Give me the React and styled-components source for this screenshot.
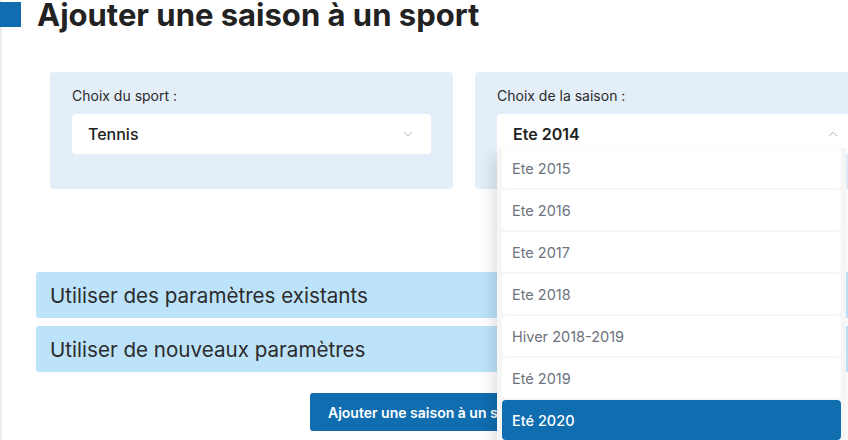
import React from "react";
import styled, { createGlobalStyle } from "styled-components";
import { ChevronDown, ChevronUp } from "lucide-react";

const seasons = [
  "Ete 2015",
  "Ete 2016",
  "Ete 2017",
  "Ete 2018",
  "Hiver 2018-2019",
  "Eté 2019",
  "Eté 2020",
];

function App() {
  return (
    <>
      <GlobalStyle />
      <Page>
        <Header>
          <Marker />
          <Title>Ajouter une saison à un sport</Title>
        </Header>
        <Content>
          <CardsRow>
            <Card>
              <Label>Choix du sport :</Label>
              <Select>
                <SelectValue>Tennis</SelectValue>
                <ChevronDown size={14} strokeWidth={1.5} color="#9aa3ad" />
              </Select>
            </Card>
            <Card>
              <Label>Choix de la saison :</Label>
              <SelectWrap>
                <Select>
                  <SelectValue $strong>Ete 2014</SelectValue>
                  <ChevronUp size={14} strokeWidth={1.5} color="#9aa3ad" />
                </Select>
                <Menu>
                  {seasons.map((s) => (
                    <Option key={s} $selected={s === "Eté 2020"}>
                      {s}
                    </Option>
                  ))}
                </Menu>
              </SelectWrap>
            </Card>
          </CardsRow>
          <Accordion>
            <AccordionBar>Utiliser des paramètres existants</AccordionBar>
            <AccordionBar>Utiliser de nouveaux paramètres</AccordionBar>
          </Accordion>
          <Actions>
            <Button>Ajouter une saison à un sport</Button>
          </Actions>
        </Content>
      </Page>
    </>
  );
}

export default App;

const GlobalStyle = createGlobalStyle`
  html, body {
    margin: 0;
    padding: 0;
    background: #ffffff;
    overflow: hidden;
  }
  body {
    font-family: Inter, "Noto Sans", sans-serif;
    color: #222;
  }
`;

const Page = styled.div`
  width: 920px;
  height: 440px;
  border-left: 2px solid #e9ecf0;
  box-sizing: border-box;
`;

const Header = styled.div`
  display: flex;
  align-items: flex-start;
  height: 32px;
  margin-left: -2px;
`;

const Marker = styled.div`
  width: 21px;
  height: 25px;
  margin-top: 2px;
  background: #0f6db0;
`;

const Title = styled.h1`
  margin: 0 0 0 16px;
  font-size: 31px;
  font-weight: 700;
  line-height: 30px;
  color: #222;
`;

const Content = styled.div`
  padding-left: 34px;
  padding-top: 40px;
`;

const CardsRow = styled.div`
  display: flex;
  gap: 22px;
  padding-left: 14px;
`;

const Card = styled.div`
  width: 403px;
  height: 117px;
  box-sizing: border-box;
  padding: 14px 22px;
  background: #e3eef8;
  border-radius: 4px;
`;

const Label = styled.div`
  font-size: 14px;
  line-height: 20px;
  color: #2a2a2a;
  margin-bottom: 8px;
`;

const SelectWrap = styled.div`
  position: relative;
`;

const Select = styled.div`
  height: 40px;
  display: flex;
  align-items: center;
  justify-content: space-between;
  padding: 0 16px;
  background: #ffffff;
  border-radius: 4px;
`;

const SelectValue = styled.span`
  font-size: 16px;
  font-weight: ${(p) => (p.$strong ? 600 : 500)};
  color: #222;
`;

const Menu = styled.div`
  position: absolute;
  top: 34px;
  left: 0;
  width: 349px;
  box-sizing: border-box;
  padding: 0 5px 5px;
  background: #f6f6f6;
  border-radius: 0 0 4px 4px;
  box-shadow: -5px 8px 14px rgba(0, 0, 0, 0.12);
  display: flex;
  flex-direction: column;
  gap: 2px;
  z-index: 5;
`;

const Option = styled.div`
  height: 40px;
  display: flex;
  align-items: center;
  padding: 0 10px;
  border-radius: 4px;
  font-size: 14.5px;
  font-weight: ${(p) => (p.$selected ? 500 : 400)};
  background: ${(p) => (p.$selected ? "#0f6db0" : "#ffffff")};
  color: ${(p) => (p.$selected ? "#ffffff" : "#6c737d")};
`;

const Accordion = styled.div`
  display: flex;
  flex-direction: column;
  gap: 8px;
  margin-top: 83px;
`;

const AccordionBar = styled.div`
  height: 46px;
  display: flex;
  align-items: center;
  padding-left: 14px;
  background: #bde3fb;
  border-radius: 3px;
  font-size: 20.6px;
  color: #2b2b2b;
`;

const Actions = styled.div`
  display: flex;
  padding-left: 274px;
  margin-top: 21px;
`;

const Button = styled.button`
  height: 38px;
  padding: 0 18px;
  border: none;
  border-radius: 3px;
  background: #0f6db0;
  color: #ffffff;
  font-family: Inter, "Noto Sans", sans-serif;
  font-size: 14px;
  font-weight: 600;
`;
